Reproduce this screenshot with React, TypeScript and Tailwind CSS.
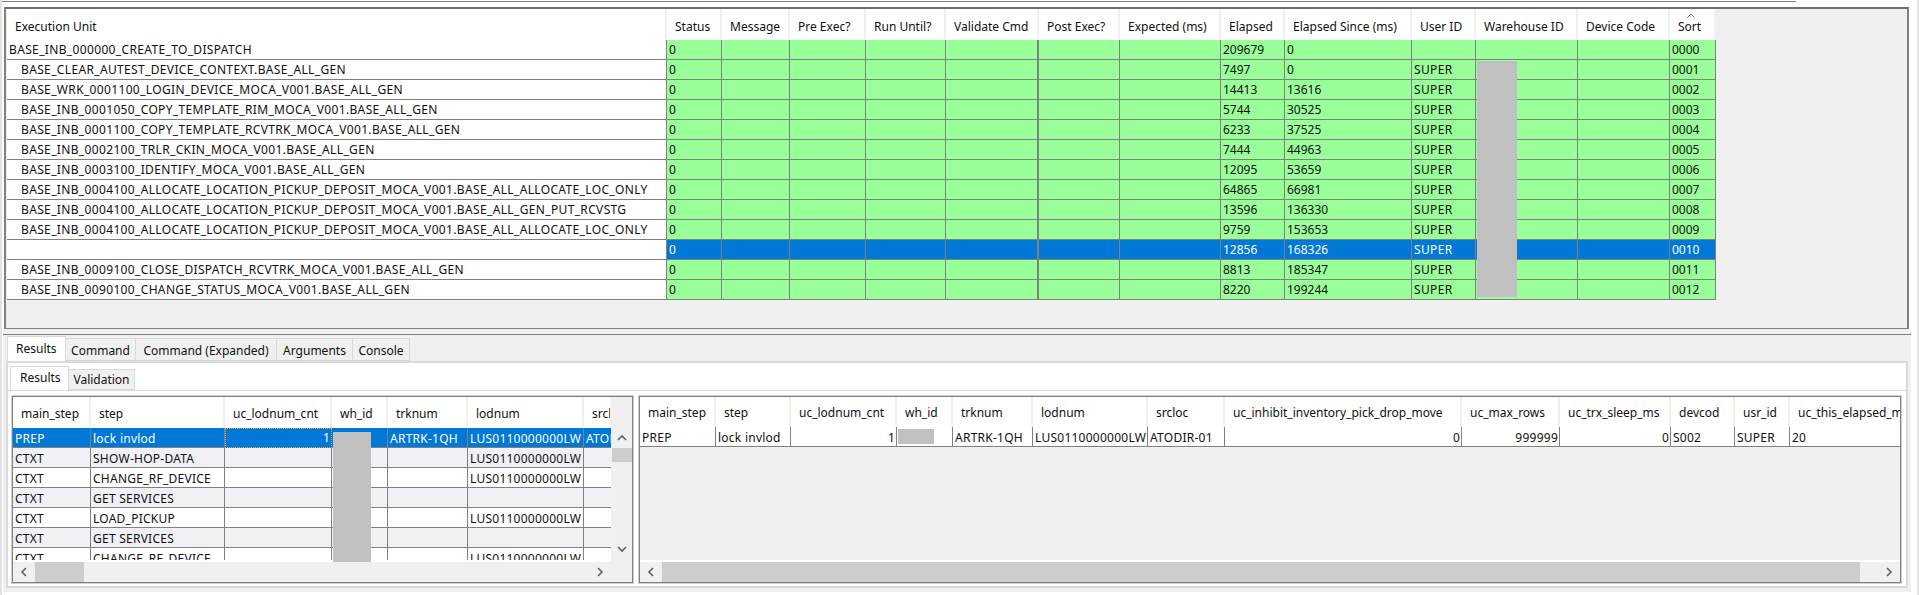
const TOP_COLS =
  "grid grid-cols-[660px_55px_68px_76px_80px_93px_81px_101px_64px_127px_64px_102px_92px_46px]";
const LEFT_COLS = "grid grid-cols-[78px_134px_107px_56px_80px_116px_28px]";
const RIGHT_COLS =
  "grid grid-cols-[76px_75px_106px_56px_80px_115px_77px_237px_98px_111px_64px_55px_112px]";

const TOP_HEADERS = [
  "Execution Unit", "Status", "Message", "Pre Exec?", "Run Until?", "Validate Cmd", "Post Exec?",
  "Expected (ms)", "Elapsed", "Elapsed Since (ms)", "User ID", "Warehouse ID", "Device Code", "Sort",
];

const UNITS: [string, string, string, string][] = [
  ["BASE_INB_000000_CREATE_TO_DISPATCH", "209679", "0", ""],
  ["BASE_CLEAR_AUTEST_DEVICE_CONTEXT.BASE_ALL_GEN", "7497", "0", "SUPER"],
  ["BASE_WRK_0001100_LOGIN_DEVICE_MOCA_V001.BASE_ALL_GEN", "14413", "13616", "SUPER"],
  ["BASE_INB_0001050_COPY_TEMPLATE_RIM_MOCA_V001.BASE_ALL_GEN", "5744", "30525", "SUPER"],
  ["BASE_INB_0001100_COPY_TEMPLATE_RCVTRK_MOCA_V001.BASE_ALL_GEN", "6233", "37525", "SUPER"],
  ["BASE_INB_0002100_TRLR_CKIN_MOCA_V001.BASE_ALL_GEN", "7444", "44963", "SUPER"],
  ["BASE_INB_0003100_IDENTIFY_MOCA_V001.BASE_ALL_GEN", "12095", "53659", "SUPER"],
  ["BASE_INB_0004100_ALLOCATE_LOCATION_PICKUP_DEPOSIT_MOCA_V001.BASE_ALL_ALLOCATE_LOC_ONLY", "64865", "66981", "SUPER"],
  ["BASE_INB_0004100_ALLOCATE_LOCATION_PICKUP_DEPOSIT_MOCA_V001.BASE_ALL_GEN_PUT_RCVSTG", "13596", "136330", "SUPER"],
  ["BASE_INB_0004100_ALLOCATE_LOCATION_PICKUP_DEPOSIT_MOCA_V001.BASE_ALL_ALLOCATE_LOC_ONLY", "9759", "153653", "SUPER"],
  ["", "12856", "168326", "SUPER"],
  ["BASE_INB_0009100_CLOSE_DISPATCH_RCVTRK_MOCA_V001.BASE_ALL_GEN", "8813", "185347", "SUPER"],
  ["BASE_INB_0090100_CHANGE_STATUS_MOCA_V001.BASE_ALL_GEN", "8220", "199244", "SUPER"],
];

const LEFT_HEADERS = ["main_step", "step", "uc_lodnum_cnt", "wh_id", "trknum", "lodnum", "srcloc"];
const LEFT_ROWS = [
  ["CTXT", "SHOW-HOP-DATA", "LUS0110000000LW"],
  ["CTXT", "CHANGE_RF_DEVICE", "LUS0110000000LW"],
  ["CTXT", "GET SERVICES", ""],
  ["CTXT", "LOAD_PICKUP", "LUS0110000000LW"],
  ["CTXT", "GET SERVICES", ""],
  ["CTXT", "CHANGE_RF_DEVICE", "LUS0110000000LW"],
];

const RIGHT_HEADERS = [
  "main_step", "step", "uc_lodnum_cnt", "wh_id", "trknum", "lodnum", "srcloc",
  "uc_inhibit_inventory_pick_drop_move", "uc_max_rows", "uc_trx_sleep_ms", "devcod", "usr_id", "uc_this_elapsed_ms",
];

const cell = "h-[20px] pl-[2px] pr-[1px] leading-[19px] whitespace-nowrap overflow-hidden border-r border-b border-[#808080]";
const lowerCell = `${cell} pt-px`;
const wide = "tracking-[0.35px]";
const wideLower = "tracking-[0.25px]";
const head = "pl-[8px] whitespace-nowrap overflow-hidden bg-white border-r-2 border-[#f0f0f0] flex items-center";

function Chevron({ dir }: { dir: "left" | "right" | "up" | "down" }) {
  const d = {
    left: "M7 1 L3 5 L7 9",
    right: "M3 1 L7 5 L3 9",
    up: "M1 7 L5 3 L9 7",
    down: "M1 3 L5 7 L9 3",
  }[dir];
  return (
    <svg width="10" height="10" viewBox="0 0 10 10" fill="none" stroke="#606060" strokeWidth="1.6">
      <path d={d} />
    </svg>
  );
}

function HScroll({ thumb }: { thumb: string }) {
  return (
    <div className="h-[20px] flex bg-[#f0f0f0] shrink-0">
      <div className="w-[22px] flex items-center justify-center"><Chevron dir="left" /></div>
      <div className={thumb} />
      <div className="flex-1" />
      <div className="w-[22px] flex items-center justify-center"><Chevron dir="right" /></div>
    </div>
  );
}

function TopTable() {
  return (
    <div className="w-[1709px]">
      <div className={`${TOP_COLS} h-[31px]`}>
        {TOP_HEADERS.map(h => (
          <div key={h} className={`${head} relative pt-[4px]`}>
            {h}
            {h === "Sort" && (
              <svg className="absolute left-[17px] top-[4px]" width="8" height="5" viewBox="0 0 8 5" fill="none" stroke="#808080">
                <path d="M0.5 4.5 L4 1 L7.5 4.5" />
              </svg>
            )}
          </div>
        ))}
      </div>
      <div className="relative">
        {UNITS.map(([name, elapsed, since, user], i) => {
          const selected = i === 10;
          const bg = selected ? "bg-[#0078d7] text-white" : "bg-[#99ff99]";
          const values = ["0", "", "", "", "", "", "", elapsed, since, user, "", "", String(i).padStart(4, "0")];
          return (
            <div key={i} className={TOP_COLS}>
              <div className={`${cell} ${wide} bg-white ${i === 0 ? "pl-[2px]" : "pl-[14px]"}`}>{name}</div>
              {values.map((v, j) => (
                <div key={j} className={`${cell} ${bg} ${j === 4 ? "border-r-2" : ""} ${j === 9 ? wide : ""}`}>{v}</div>
              ))}
            </div>
          );
        })}
        {/* redacted warehouse ids */}
        <div className="absolute left-[1470px] top-[21px] w-[40px] h-[236px] bg-[#c0c0c0]" />
      </div>
    </div>
  );
}

function LeftGrid() {
  return (
    <div className="w-[621px] h-[187px] border border-[#808080] outline outline-[#d0d0d0] flex flex-col bg-[#f0f0f0] relative">
      <div className="flex h-[163px]">
        <div className={`w-[598px] overflow-hidden bg-white ${wideLower}`}>
          <div className={`${LEFT_COLS} h-[31px] tracking-normal`}>
            {LEFT_HEADERS.map(h => <div key={h} className={`${head} pt-[2px]`}>{h}</div>)}
          </div>
          <div className={LEFT_COLS}>
            <div className={`${lowerCell} bg-[#0078d7] text-white`}>PREP</div>
            <div className={`${lowerCell} bg-[#0078d7] text-white`}>lock invlod</div>
            <div className="h-[20px] pr-[1px] leading-[18px] text-right bg-[#0078d7] text-white border border-dotted border-[#f7a13a]">1</div>
            <div className={`${lowerCell} bg-[#0078d7]`} />
            <div className={`${lowerCell} bg-[#0078d7] text-white`}>ARTRK-1QH</div>
            <div className={`${lowerCell} bg-[#0078d7] text-white`}>LUS0110000000LW</div>
            <div className={`${lowerCell} bg-[#0078d7] text-white border-r-0`}>ATODIR-01</div>
          </div>
          {LEFT_ROWS.map((r, i) => {
            const bg = i % 2 === 0 ? "bg-[#f0f0f5]" : "bg-white";
            return (
              <div key={i} className={LEFT_COLS}>
                <div className={`${lowerCell} ${bg}`}>{r[0]}</div>
                <div className={`${lowerCell} ${bg}`}>{r[1]}</div>
                <div className={`${lowerCell} ${bg}`} />
                <div className={`${lowerCell} ${bg}`} />
                <div className={`${lowerCell} ${bg}`} />
                <div className={`${lowerCell} ${bg}`}>{r[2]}</div>
                <div className={`${lowerCell} ${bg} border-r-0`} />
              </div>
            );
          })}
        </div>
        <div className="w-[21px] flex flex-col items-center bg-[#f0f0f0]">
          <div className="h-[31px] shrink-0" />
          <div className="h-[20px] shrink-0 flex items-center"><Chevron dir="up" /></div>
          <div className="h-[14px] w-[20px] bg-[#cdcdcd]" />
          <div className="flex-1" />
          <div className="h-[20px] shrink-0 flex items-center mb-[1px]"><Chevron dir="down" /></div>
        </div>
      </div>
      <div className="h-[2px] w-[598px] bg-white" />
      <div className="w-[598px]">
        <HScroll thumb="w-[49px] bg-[#cdcdcd]" />
      </div>
      {/* redacted warehouse ids */}
      <div className="absolute left-[320px] top-[35px] w-[38px] h-[130px] bg-[#c0c0c0]" />
    </div>
  );
}

function RightGrid() {
  const values = ["PREP", "lock invlod", "1", "", "ARTRK-1QH", "LUS0110000000LW", "ATODIR-01", "0", "999999", "0", "S002", "SUPER", "20"];
  return (
    <div className="w-[262px] flex-1 h-[187px] border border-[#808080] outline outline-[#d0d0d0] flex flex-col bg-[#f0f0f0] relative overflow-hidden">
      <div className="flex-1 overflow-hidden">
        <div className={`${RIGHT_COLS} h-[30px] w-[1262px]`}>
          {RIGHT_HEADERS.map(h => <div key={h} className={`${head} pt-[2px]`}>{h}</div>)}
        </div>
        <div className={`${RIGHT_COLS} w-[1262px] ${wideLower}`}>
          {values.map((v, i) => (
            <div key={i} className={`${lowerCell} bg-white ${[2, 7, 8, 9].includes(i) ? "text-right" : ""}`}>{v}</div>
          ))}
        </div>
      </div>
      <div className="h-[2px] bg-white shrink-0" />
      <HScroll thumb="w-[1198px] bg-[#cdcdcd]" />
      {/* redacted warehouse id */}
      <div className="absolute left-[258px] top-[32px] w-[36px] h-[15px] bg-[#c0c0c0]" />
    </div>
  );
}

export default function App() {
  return (
    <div className="w-[1919px] h-[595px] overflow-hidden bg-white border-x-2 border-[#e3e3e3] text-[12px] text-[#101010] font-['Noto_Sans',sans-serif]">
      <div className="h-[7px] flex">
        <div className="w-[1794px] h-[2px] border-b border-[#808080]" />
      </div>
      <div className="w-[1905px] ml-[2px] h-[322px] bg-[#f0f0f0] border-t-2 border-t-[#6e6e6e] border-x-2 border-x-[#808080] border-b border-b-[#808080] flex pl-px">
        <TopTable />
      </div>
      <div className="w-[1908px] ml-[1px] h-[5px] bg-[#f0f0f0]" />
      <div className="w-[1908px] ml-[1px] h-[258px] bg-[#f0f0f0] border-t border-[#808080] flex flex-col">
        <div className="h-[26px] pl-[4px] flex items-end shrink-0">
          <div className="w-[59px] h-[25px] bg-white border border-b-0 border-[#d9d9d9] pl-[8px] flex items-center">Results</div>
          {[
            ["w-[70px]", "Command"],
            ["w-[141px]", "Command (Expanded)"],
            ["w-[76px]", "Arguments"],
            ["w-[57px]", "Console"],
          ].map(([w, label]) => (
            <div key={label} className={`${w} h-[23px] pt-[2px] border border-l-0 border-[#d9d9d9] flex items-center justify-center`}>{label}</div>
          ))}
        </div>
        <div className="w-[1902px] ml-[3px] h-[227px] bg-white border-2 border-[#dadada] flex flex-col">
          <div className="h-[28px] pl-[2px] flex items-end shrink-0 border-b border-[#d9d9d9]">
            <div className="w-[59px] h-[24px] pl-[9px] pb-[2px] bg-white border border-b-0 border-[#d9d9d9] flex items-center">Results</div>
            <div className="w-[66px] h-[21px] border border-l-0 border-[#d9d9d9] bg-[#f0f0f0] flex items-center justify-center">Validation</div>
          </div>
          <div className="pl-[4px] pr-[5px] pt-[5px] flex gap-[6px]">
            <LeftGrid />
            <RightGrid />
          </div>
        </div>
      </div>
    </div>
  );
}
